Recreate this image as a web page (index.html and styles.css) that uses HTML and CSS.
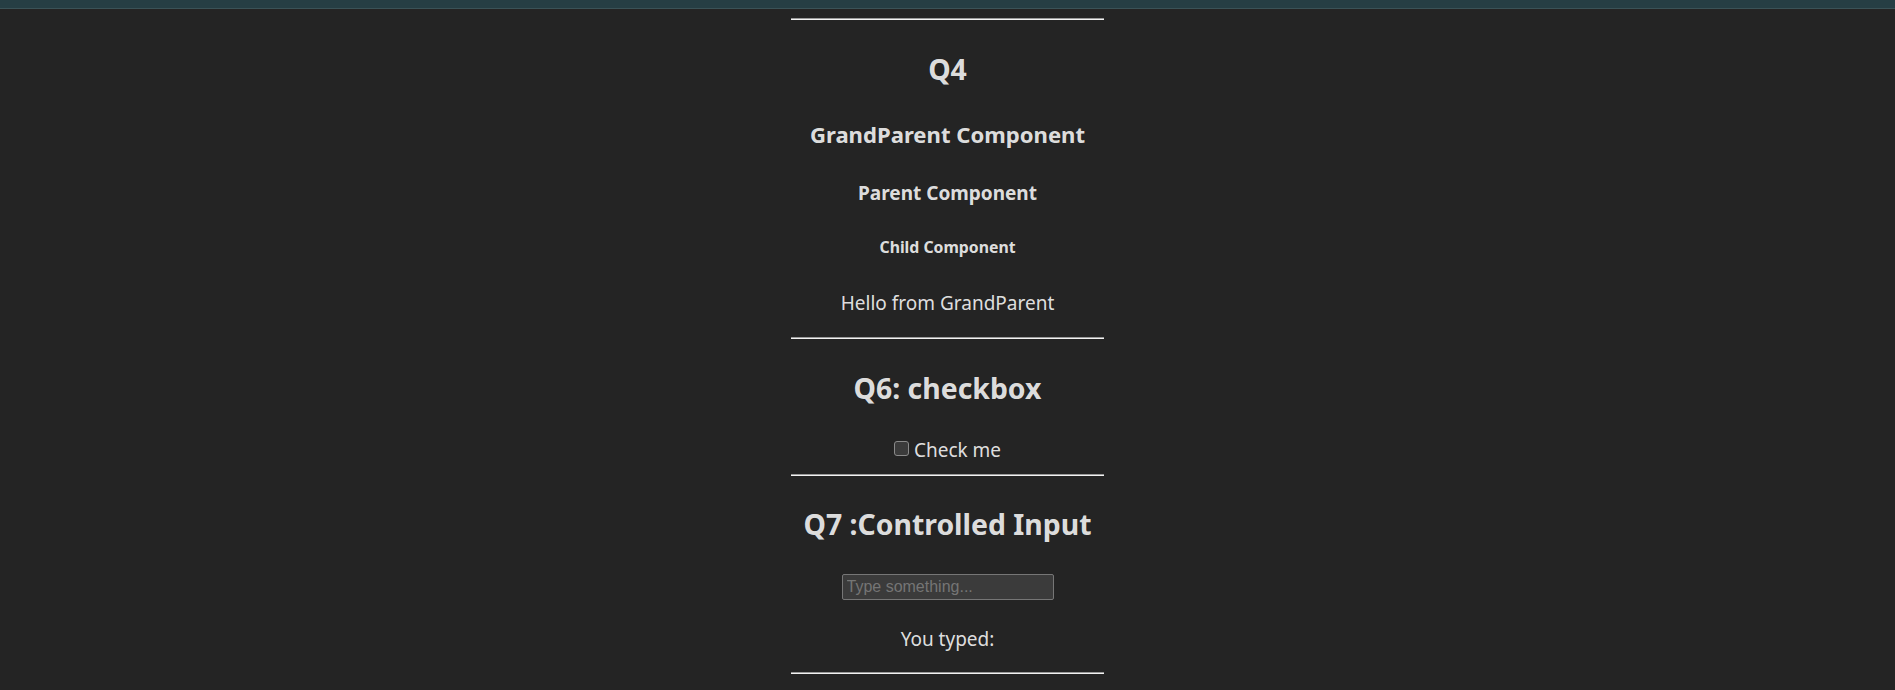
FILE: index.html
```html
<!DOCTYPE html>
<html lang="en">
<head>
<meta charset="utf-8">
<title>Questions</title>
<link rel="stylesheet" href="styles.css">
</head>
<body>
<div class="topbar"></div>
<main class="page">
  <hr class="rule rule-first">
  <section class="q q4">
    <h2 class="title">Q4</h2>
    <h3 class="gp">GrandParent Component</h3>
    <h4 class="parent">Parent Component</h4>
    <h5 class="child">Child Component</h5>
    <p class="msg">Hello from GrandParent</p>
  </section>
  <hr class="rule">
  <section class="q q6">
    <h2 class="title">Q6: checkbox</h2>
    <label class="check"><input type="checkbox" class="box"> Check me</label>
  </section>
  <hr class="rule">
  <section class="q q7">
    <h2 class="title title-q7">Q7 :Controlled Input</h2>
    <input type="text" class="field" placeholder="Type something...">
    <p class="typed">You typed: </p>
  </section>
  <hr class="rule">
</main>
</body>
</html>
```

FILE: styles.css
```css
html, body {
  margin: 0;
  padding: 0;
}
body {
  background: #242424;
  color: rgba(255, 255, 255, 0.87);
  font-family: "Noto Sans", "Open Sans", sans-serif;
  height: 690px;
  overflow: hidden;
}
.topbar {
  height: 8px;
  background: #263e44;
  border-bottom: 1px solid #3b5257;
}
.page {
  width: 313px;
  margin: 0 auto;
  text-align: center;
  display: flex;
  flex-direction: column;
  align-items: stretch;
  padding-top: 9px;
}
.rule {
  margin: 0;
  height: 0;
  border: 0;
  border-top: 1px solid #9a9a9a;
  border-bottom: 1px solid #f2f2f2;
}
.q {
  display: flex;
  flex-direction: column;
  align-items: center;
}
.title {
  margin: 31px 0 0;
  font-size: 28.4px;
  line-height: 36px;
  font-weight: 700;
}
.title-q7 {
  margin-top: 29.8px;
}
.gp {
  margin: 33px 0 0;
  font-size: 22.1px;
  line-height: 28px;
  font-weight: 700;
}
.parent {
  margin: 33px 0 0;
  font-size: 19px;
  line-height: 24px;
  font-weight: 700;
}
.child {
  margin: 31.5px 0 0;
  font-size: 15.8px;
  line-height: 20px;
  font-weight: 700;
}
.msg {
  margin: 32.5px 0 20px;
  font-size: 19px;
  line-height: 28px;
}
.check {
  margin: 29.5px 0 10.3px;
  font-size: 19px;
  line-height: 28px;
  display: flex;
  align-items: center;
  gap: 5px;
}
.box {
  appearance: none;
  width: 15px;
  height: 15px;
  margin: 0;
  border: 1px solid #8a8a8a;
  border-radius: 3px;
  background: #3b3b3b;
  position: relative;
  top: -1px;
}
.field {
  margin: 32.5px 0 0;
  box-sizing: border-box;
  width: 212px;
  height: 26px;
  background: #3b3b3b;
  border: 1px solid #767676;
  border-radius: 2px;
  padding: 1px 4px;
  color: #e0e0e0;
  font-family: "Liberation Sans", Arial, sans-serif;
  font-size: 16px;
}
.field::placeholder {
  color: #757575;
}
.typed {
  margin: 25.4px 0 18.8px;
  font-size: 19px;
  line-height: 28px;
}
```
